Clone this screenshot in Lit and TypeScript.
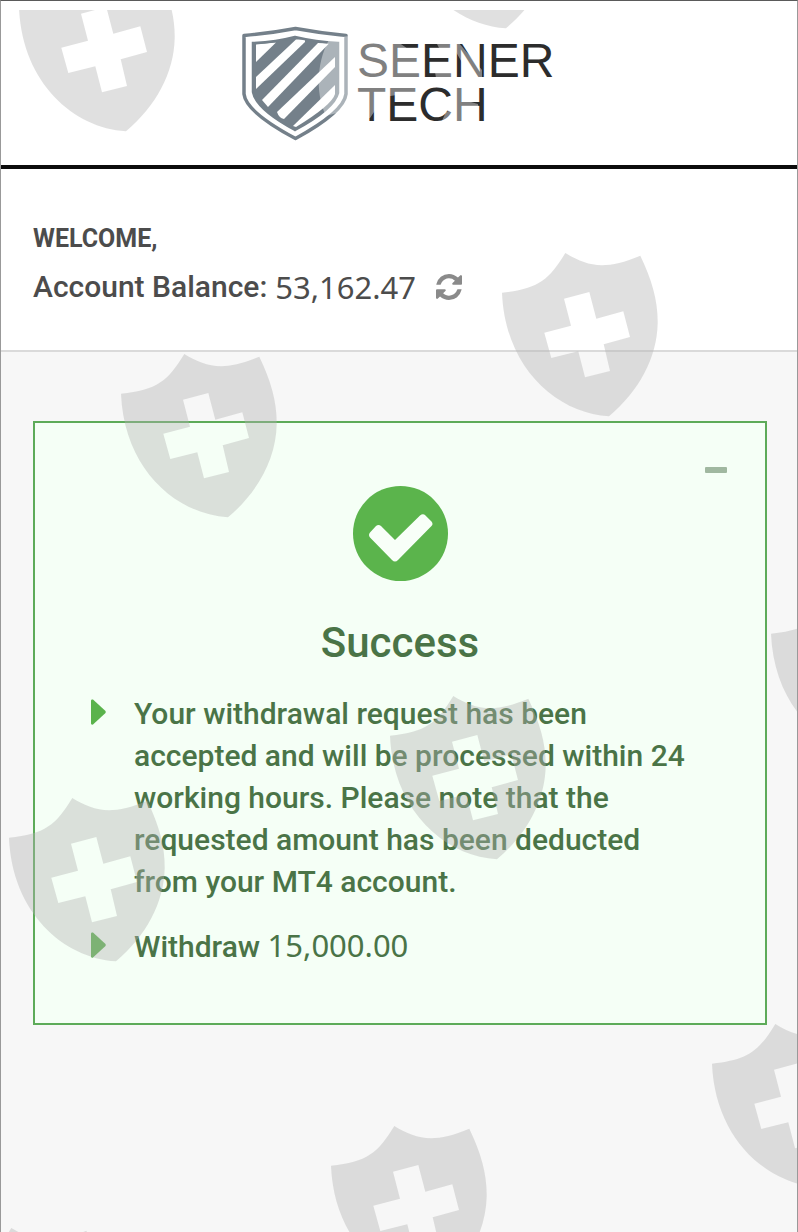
import { LitElement, html, css, svg } from "lit";
import { customElement, property, state } from "lit/decorators.js";

const SHIELD =
  "M0 39.7C36 36 47 27 63.3 0C85 13 102 18 138.3 2.7C150 27 156 48 155.7 70C155 105 137 138 107 163.3C54 160 3 114 0 39.7Z" +
  "M62 45.7L69 72.7L42.3 79.7L49.3 105L76.3 98.3L83 124.3L108 118L101.7 91.3L128 84L121.3 58.3L94.3 65.7L87.3 39Z";

const SPOTS: [number, number][] = [
  [19, -32],
  [399, -135],
  [502, 253],
  [121, 354],
  [771, 594],
  [390, 696],
  [9, 798],
  [712, 1024],
  [331, 1126],
  [-52, 1228],
];

@customElement("shield-pattern")
class ShieldPattern extends LitElement {
  static styles = css`
    :host {
      position: absolute;
      inset: 9px 0 0;
      overflow: hidden;
      pointer-events: none;
    }
    .layer {
      display: block;
      width: 100%;
      height: 100%;
      fill: #b2b2b2;
      fill-opacity: 0.4;
      fill-rule: evenodd;
    }
  `;
  render() {
    return html`<svg class="layer" aria-hidden="true">
      ${SPOTS.map(([x, y]) => svg`<path d=${SHIELD} transform="translate(${x - 1} ${y - 10})"/>`)}
    </svg>`;
  }
}

@customElement("brand-logo")
class BrandLogo extends LitElement {
  static styles = css`
    :host {
      display: flex;
      justify-content: center;
      align-items: center;
      gap: 8px;
      position: relative;
    }
    .mark {
      width: 108px;
      height: 116px;
    }
    .name {
      width: 200px;
      font: 48px/44px "Liberation Sans", Arial, sans-serif;
      color: #2c2c2c;
    }
    .sheen {
      position: absolute;
      top: 0;
      left: 50%;
      width: 320px;
      height: 116px;
      margin-left: -160px;
      fill: #fff;
      fill-opacity: 0.4;
    }
  `;
  render() {
    return html`
      <svg class="mark" viewBox="241 25 108 116" aria-hidden="true">
        <path d="M295.500 28.500Q320 33 346 35.500V94Q344 112 295.500 138.500Q246 112 244 94V35.500Q272 33 295.500 28.500Z" fill="#fff" stroke="#74808a" stroke-width="3.500" stroke-linejoin="round"/>
        <clipPath id="inner"><path d="M295 37Q316 42 338 43V93Q334 109 295 130Q256 109 253 92V43Q276 42 295 37Z"/></clipPath>
        <g clip-path="url(#inner)">
          <rect x="250" y="35" width="90" height="96" fill="#74808a"/>
          <g fill="#fff">
            <path d="M256 44.500L276 42.500L256 62Z"/>
            <path d="M256 77L296 39.500L305 39.500V42L256 89Z"/>
            <path d="M262 100L318 43L329 43.500L268 107Z"/>
            <path d="M277 112L335 57V67L284 119Q279 118 277 112Z"/>
            <path d="M293 126L335 85V94Q332 105 296 127Z"/>
          </g>
        </g>
        <path d="M295 37Q316 42 338 43V93Q334 109 295 130Q256 109 253 92V43Q276 42 295 37Z" fill="none" stroke="#74808a" stroke-width="2.500"/>
      </svg>
      <div class="name">SEENER TECH</div>
      <svg class="sheen" viewBox="239 25 320 116" aria-hidden="true">
        <path d="M330 38C318 58 314 90 326 116L340 112L348 100L350 118H370L384 97L416 92L421 84V52L408 49L398 42H350V36Z"/>
        <path d="M436 42H458L482 70V80H472L456 52V78H436L434 66H448V50H440Z"/>
        <path d="M456 84H464V100L478 104V110H464V125H440L446 112L456 108Z"/>
      </svg>
    `;
  }
}

interface Message {
  text: string;
  amount?: string;
}

@customElement("status-card")
class StatusCard extends LitElement {
  @property({ type: Array }) messages: Message[] = [];
  @state() private open = true;

  static styles = css`
    :host {
      display: block;
      position: relative;
      border: 2px solid #5dab59;
      background: #f5fff6;
      color: #4a7447;
      padding: 63px 56px 55px;
    }
    .toggle {
      position: absolute;
      top: 32px;
      right: 27px;
      width: 44px;
      height: 30px;
      display: grid;
      place-items: center;
      padding: 0;
      border: 0;
      background: none;
      cursor: pointer;
    }
    .bar {
      width: 22px;
      height: 6px;
      border-radius: 1px;
      background: #a0b8a0;
    }
    .tick {
      display: block;
      width: 95px;
      height: 95px;
      margin: 0 auto;
    }
    .title {
      margin: 38px 0 26px;
      font-size: 42px;
      line-height: 48px;
      font-weight: 500;
      text-align: center;
    }
    .list {
      list-style: none;
      margin: 0;
      padding: 0 16px 0 0;
      display: grid;
      gap: 23px;
      font-size: 30px;
      line-height: 42px;
      font-weight: 500;
    }
    .item {
      display: grid;
      grid-template-columns: 15px 1fr;
      column-gap: 28px;
    }
    .arrow {
      width: 15px;
      height: 26px;
      margin-top: 6px;
      fill: #5ab34c;
    }
    .amount {
      font-family: "Noto Sans", "Open Sans", sans-serif;
      font-size: 31px;
      line-height: 1;
      font-weight: 400;
    }
  `;
  render() {
    return html`
      <button class="toggle" aria-label="Toggle details" @click=${() => (this.open = !this.open)}>
        <span class="bar"></span>
      </button>
      <svg class="tick" viewBox="0 0 95 95" aria-hidden="true">
        <circle cx="47.500" cy="47.500" r="47.500" fill="#5bb44c" />
        <path
          d="M23 40Q25.500 38 28 40L42 54L67 29.500Q70 27 72.500 29.500L78.500 35.500Q80.500 38 78.500 40L45 74Q42 77 39 74L17 51.500Q15 49 17 46.500Z"
          fill="#f8fff8"
        />
      </svg>
      <h1 class="title">Success</h1>
      ${this.open
        ? html`<ul class="list">
            ${this.messages.map(
              (m) => html`<li class="item">
                <svg class="arrow" viewBox="0 0 15 26" aria-hidden="true">
                  <path d="M0 1.500Q0 0 2 0.500L14.500 12Q15 13 14.500 14L2 25.500Q0 26 0 24.500Z" />
                </svg>
                <div>${m.text}${m.amount ? html` <span class="amount">${m.amount}</span>` : null}</div>
              </li>`
            )}
          </ul>`
        : null}
    `;
  }
}

@customElement("app-root")
class AppRoot extends LitElement {
  static styles = css`
    :host {
      display: flex;
      flex-direction: column;
      position: relative;
      box-sizing: border-box;
      min-height: 100vh;
      overflow: hidden;
      border: solid #999;
      border-width: 1px 1px 0;
      border-top-color: #5a5a5a;
      background: #f7f7f7;
      font-family: Roboto, "Liberation Sans", sans-serif;
    }
    .top {
      padding: 24px 0;
      background: #fff;
      border-bottom: 4px solid #0c0c0c;
    }
    .account {
      padding: 50px 32px 43px;
      background: #fff;
      border-bottom: 2px solid #dadada;
      color: #4c4c4c;
    }
    .welcome {
      margin: 0 0 8px;
      font-size: 25px;
      line-height: 40px;
      font-weight: 700;
      text-transform: uppercase;
    }
    .balance {
      display: flex;
      align-items: center;
      gap: 8px;
      font-size: 30px;
      line-height: 40px;
      font-weight: 500;
    }
    .amount {
      font-family: "Noto Sans", "Open Sans", sans-serif;
      font-size: 31px;
      font-weight: 400;
    }
    .refresh {
      margin: 0 0 0 12px;
      padding: 0;
      border: 0;
      background: none;
      width: 26px;
      height: 26px;
      cursor: pointer;
    }
    .icon {
      display: block;
      fill: #8a8a8a;
    }
    .main {
      padding: 69px 30px 69px 32px;
    }
  `;
  render() {
    return html`
      <header class="top"><brand-logo></brand-logo></header>
      <section class="account">
        <p class="welcome">Welcome,</p>
        <div class="balance">
          <span>Account Balance:</span>
          <span class="amount">53,162.47</span>
          <button class="refresh" aria-label="Refresh balance">
            <svg class="icon" width="26" height="26" viewBox="0 0 1536 1536">
              <path
                d="M1511 928q0 5-1 7-64 268-268 434.500T764 1536q-146 0-282.500-55T238 1324l-129 129q-19 19-45 19t-45-19-19-45V960q0-26 19-45t45-19h448q26 0 45 19t19 45-19 45l-137 137q71 66 161 102t187 36q134 0 250-65t186-179q11-17 53-117 8-23 30-23h192q13 0 22.500 9.500t9.500 22.500zm25-800v448q0 26-19 45t-45 19h-448q-26 0-45-19t-19-45 19-45l138-138Q969 256 768 256q-134 0-250 65T332 500q-11 17-53 117-8 23-30 23H50q-13 0-22.500-9.500T18 608v-7q65-268 270-434.500T768 0q146 0 284 55.500T1297 212l130-129q19-19 45-19t45 19 19 45z"
              />
            </svg>
          </button>
        </div>
      </section>
      <main class="main">
        <status-card
          .messages=${[
            {
              text: "Your withdrawal request has been accepted and will be processed within 24 working hours. Please note that the requested amount has been deducted from your MT4 account.",
            },
            { text: "Withdraw", amount: "15,000.00" },
          ]}
        ></status-card>
      </main>
      <shield-pattern></shield-pattern>
    `;
  }
}
